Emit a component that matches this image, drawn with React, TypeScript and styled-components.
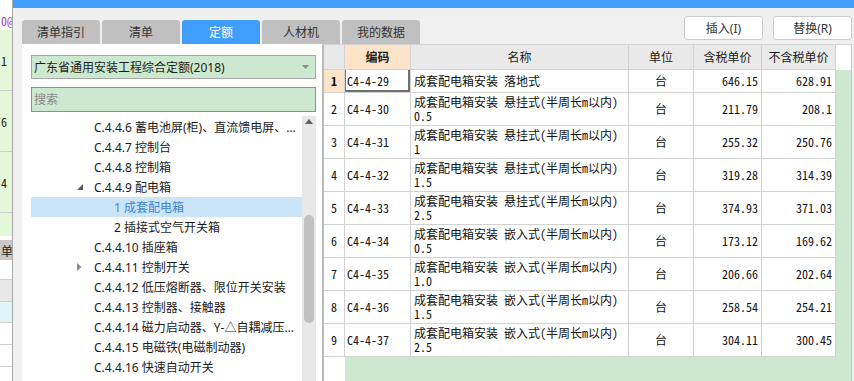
import React from "react";
import styled, { createGlobalStyle } from "styled-components";

const UI_FONT = `"Noto Sans", "Noto Sans CJK SC", sans-serif`;
const GRID_FONT = `"Noto Sans Mono CJK SC", "Liberation Mono", "Noto Sans CJK SC", monospace`;

const GlobalStyle = createGlobalStyle`
  html, body { margin: 0; padding: 0; overflow: hidden; background: #f0f0f0; }
  body { font-family: ${UI_FONT}; }
  * { box-sizing: border-box; }
`;

const Page = styled.div`
  display: flex;
  width: 854px;
  height: 381px;
  overflow: hidden;
`;

/* ---------- background application strip ---------- */
const BgStrip = styled.div`
  width: 13px;
  flex: none;
  display: flex;
  flex-direction: column;
  background: #fff;
  border-right: 1px solid #a9a9a9;
  overflow: hidden;
  font-family: ${GRID_FONT};
  font-size: 12px;
  color: #222;
`;

const BgCell = styled.div<{ $h: number; $bg?: string; $color?: string; $line?: boolean }>`
  height: ${(p) => p.$h}px;
  flex: none;
  background: ${(p) => p.$bg || "#fff"};
  color: ${(p) => p.$color || "#222"};
  border-bottom: ${(p) => (p.$line ? "1px solid #cfcfcf" : "none")};
  display: flex;
  align-items: center;
  white-space: nowrap;
  overflow: hidden;
  padding-left: 1px;
`;

/* ---------- dialog ---------- */
const Dialog = styled.div`
  flex: 1;
  min-width: 0;
  display: flex;
  flex-direction: column;
  background: #f0f0f0;
`;

const TitleBar = styled.div`
  height: 8px;
  flex: none;
  background: #409eff;
`;

const TopBar = styled.div`
  height: 36px;
  flex: none;
  display: flex;
  align-items: flex-end;
  padding: 0 2px 0 9px;
`;

const Tabs = styled.div`
  display: flex;
  gap: 2px;
`;

const Tab = styled.div<{ $active?: boolean }>`
  width: 78px;
  height: 24px;
  border-radius: 3px 3px 0 0;
  background: ${(p) => (p.$active ? "#409eff" : "#c0c0c0")};
  color: ${(p) => (p.$active ? "#fff" : "#333")};
  font-size: 12px;
  display: flex;
  align-items: center;
  justify-content: center;
`;

const Spacer = styled.div`
  flex: 1;
`;

const Buttons = styled.div`
  display: flex;
  gap: 10px;
  margin-bottom: 4px;
`;

const Button = styled.div`
  width: 79px;
  height: 24px;
  background: #fff;
  border: 1px solid #c9c9c9;
  border-radius: 3px;
  font-size: 12px;
  color: #333;
  display: flex;
  align-items: center;
  justify-content: center;
`;

const Content = styled.div`
  flex: 1;
  min-height: 0;
  display: flex;
  padding: 0 2px 0 9px;
`;

/* ---------- left panel ---------- */
const LeftPanel = styled.div`
  width: 300px;
  flex: none;
  background: #fff;
  display: flex;
  flex-direction: column;
  padding: 11px 6px 0 9px;
`;

const Select = styled.div`
  height: 24px;
  flex: none;
  background: #cce8cf;
  border: 1px solid #a6a6a6;
  display: flex;
  align-items: center;
  padding: 0 6px 0 2px;
  font-size: 12px;
  color: #1e1e1e;
`;

const SelectText = styled.span`
  flex: 1;
`;

const Search = styled.input`
  height: 25px;
  flex: none;
  margin-top: 8px;
  background: #cce8cf;
  border: 1px solid #4a9ff5;
  padding: 0 0 0 2px;
  font-family: ${UI_FONT};
  font-size: 12px;
  color: #222;
  outline: none;
  &::placeholder { color: #8a8a8a; }
`;

const TreeArea = styled.div`
  flex: 1;
  min-height: 0;
  margin-top: 4px;
  display: flex;
`;

const TreeList = styled.div`
  flex: 1;
  min-width: 0;
  padding-top: 1px;
  display: flex;
  flex-direction: column;
`;

const TreeRow = styled.div<{ $level: number; $selected?: boolean }>`
  height: 20px;
  flex: none;
  display: flex;
  align-items: center;
  padding-left: ${(p) => (p.$level === 1 ? 46 : 66)}px;
  padding-right: 2px;
  background: ${(p) => (p.$selected ? "#cce4f7" : "transparent")};
  color: ${(p) => (p.$selected ? "#3b86dc" : "#1a1a1a")};
  font-size: 12px;
`;

const Expander = styled.span`
  width: 17px;
  flex: none;
  display: flex;
  align-items: center;
`;

const TreeText = styled.span`
  flex: 1;
  min-width: 0;
  white-space: nowrap;
  overflow: hidden;
  text-overflow: ellipsis;
`;

const ScrollBar = styled.div`
  width: 14px;
  flex: none;
  background: #e8e8e8;
  display: flex;
  flex-direction: column;
  align-items: center;
  padding-top: 3px;
`;

const Thumb = styled.div`
  width: 10px;
  height: 108px;
  margin-top: 91px;
  border-radius: 5px;
  background: #c1c1c1;
`;

/* ---------- grid ---------- */
const COLS = "21px 66px 218px 65px 68px 74px 15px";

const Grid = styled.div`
  width: 530px;
  flex: none;
  display: flex;
  flex-direction: column;
  background: #fff;
  border-left: 2px solid #b9b9b9;
  border-right: 1px solid #c8c8c8;
  border-top: 1px solid #d4d4d4;
  font-family: ${GRID_FONT};
  font-size: 12px;
  color: #111;
`;

const Row = styled.div<{ $h: number }>`
  display: grid;
  grid-template-columns: ${COLS};
  height: ${(p) => p.$h}px;
  flex: none;
`;

const HeadCell = styled.div<{ $accent?: boolean; $blank?: boolean }>`
  background: ${(p) => (p.$blank ? "#fff" : p.$accent ? "#fde4c8" : "#e9e9e9")};
  border-right: ${(p) => (p.$blank ? "none" : "1px solid #d2d2d2")};
  border-bottom: ${(p) => (p.$blank ? "none" : "1px solid #d2d2d2")};
  font-family: ${UI_FONT};
  font-weight: ${(p) => (p.$accent ? 700 : 400)};
  color: #222;
  display: flex;
  align-items: center;
  justify-content: center;
`;

const Cell = styled.div<{ $align?: "left" | "center" | "right"; $accent?: boolean; $focus?: boolean; $bold?: boolean }>`
  background: ${(p) => (p.$accent ? "#fde4c8" : "#fff")};
  border-right: 1px solid #d2d2d2;
  border-bottom: 1px solid #d2d2d2;
  display: flex;
  align-items: center;
  justify-content: ${(p) => (p.$align === "right" ? "flex-end" : p.$align === "center" ? "center" : "flex-start")};
  padding: ${(p) => (p.$align === "right" ? "0 3px 0 0" : p.$align === "center" ? "0" : "0 0 0 2px")};
  font-weight: ${(p) => (p.$bold ? 700 : 400)};
  line-height: 14px;
  white-space: nowrap;
  overflow: hidden;
  box-shadow: ${(p) => (p.$focus ? "inset 1px 0 0 #3a8ee6, inset -2px -2px 0 #6f6f6f" : "none")};
`;

const NameLines = styled.div`
  display: flex;
  flex-direction: column;
  padding-left: 1px;
`;

const Filler = styled.div`
  background: #cce8cf;
`;

const BottomFill = styled.div`
  flex: 1;
  display: grid;
  grid-template-columns: 21px 1fr;
`;

const BlankCell = styled.div`
  background: #fff;
`;

type TreeItem = { label: string; level: 1 | 2; arrow?: "open" | "closed"; selected?: boolean };

const tree: TreeItem[] = [
  { label: "C.4.4.6 蓄电池屏(柜)、直流馈电屏、逆变电源柜安装", level: 1 },
  { label: "C.4.4.7 控制台", level: 1 },
  { label: "C.4.4.8 控制箱", level: 1 },
  { label: "C.4.4.9 配电箱", level: 1, arrow: "open" },
  { label: "1 成套配电箱", level: 2, selected: true },
  { label: "2 插接式空气开关箱", level: 2 },
  { label: "C.4.4.10 插座箱", level: 1 },
  { label: "C.4.4.11 控制开关", level: 1, arrow: "closed" },
  { label: "C.4.4.12 低压熔断器、限位开关安装", level: 1 },
  { label: "C.4.4.13 控制器、接触器", level: 1 },
  { label: "C.4.4.14 磁力启动器、Y-△自耦减压启动器安装", level: 1 },
  { label: "C.4.4.15 电磁铁(电磁制动器)", level: 1 },
  { label: "C.4.4.16 快速自动开关", level: 1 },
];

const HANG = "成套配电箱安装 悬挂式(半周长m以内)";
const EMB = "成套配电箱安装 嵌入式(半周长m以内)";

const rows = [
  { n: "1", code: "C4-4-29", name: ["成套配电箱安装 落地式"], tax: "646.15", notax: "628.91" },
  { n: "2", code: "C4-4-30", name: [HANG, "0.5"], tax: "211.79", notax: "208.1" },
  { n: "3", code: "C4-4-31", name: [HANG, "1"], tax: "255.32", notax: "250.76" },
  { n: "4", code: "C4-4-32", name: [HANG, "1.5"], tax: "319.28", notax: "314.39" },
  { n: "5", code: "C4-4-33", name: [HANG, "2.5"], tax: "374.93", notax: "371.03" },
  { n: "6", code: "C4-4-34", name: [EMB, "0.5"], tax: "173.12", notax: "169.62" },
  { n: "7", code: "C4-4-35", name: [EMB, "1.0"], tax: "206.66", notax: "202.64" },
  { n: "8", code: "C4-4-36", name: [EMB, "1.5"], tax: "258.54", notax: "254.21" },
  { n: "9", code: "C4-4-37", name: [EMB, "2.5"], tax: "304.11", notax: "300.45" },
];

const OpenArrow = () => (
  <svg width="6" height="6" viewBox="0 0 6 6">
    <polygon points="0,6 6,6 6,0" fill="#595959" />
  </svg>
);

const ClosedArrow = () => (
  <svg width="5" height="8" viewBox="0 0 5 8">
    <polygon points="0,0 4.5,4 0,8" fill="#8a8a8a" />
  </svg>
);

const DropArrow = () => (
  <svg width="7" height="4" viewBox="0 0 7 4">
    <polygon points="0,0 7,0 3.5,4" fill="#8c8c8c" />
  </svg>
);

const UpArrow = () => (
  <svg width="8" height="5" viewBox="0 0 8 5">
    <polygon points="0,5 8,5 4,0" fill="#606060" />
  </svg>
);

export default function App() {
  return (
    <>
      <GlobalStyle />
      <Page>
        <BgStrip>
          <BgCell $h={10} />
          <BgCell $h={20} $color="#a23cc8">0@1</BgCell>
          <BgCell $h={61} $bg="#e4f8d9" $line>1</BgCell>
          <BgCell $h={61} $bg="#e4f8d9" $line>6</BgCell>
          <BgCell $h={61} $bg="#e4f8d9" $line>4</BgCell>
          <BgCell $h={23} $bg="#e4f8d9" />
          <BgCell $h={4} />
          <BgCell $h={20} $bg="#c8c8c8">单位</BgCell>
          <BgCell $h={20} $line />
          <BgCell $h={22} $bg="#e8e8e8" $line />
          <BgCell $h={21} $bg="#dff6f6" $line />
          <BgCell $h={22} $line />
          <BgCell $h={22} $line />
          <BgCell $h={20} />
        </BgStrip>

        <Dialog>
          <TitleBar />
          <TopBar>
            <Tabs>
              <Tab>清单指引</Tab>
              <Tab>清单</Tab>
              <Tab $active>定额</Tab>
              <Tab>人材机</Tab>
              <Tab>我的数据</Tab>
            </Tabs>
            <Spacer />
            <Buttons>
              <Button>插入(I)</Button>
              <Button>替换(R)</Button>
            </Buttons>
          </TopBar>

          <Content>
            <LeftPanel>
              <Select>
                <SelectText>广东省通用安装工程综合定额(2018)</SelectText>
                <DropArrow />
              </Select>
              <Search placeholder="搜索" readOnly />
              <TreeArea>
                <TreeList>
                  {tree.map((t) => (
                    <TreeRow key={t.label} $level={t.level} $selected={t.selected}>
                      <Expander>
                        {t.arrow === "open" && <OpenArrow />}
                        {t.arrow === "closed" && <ClosedArrow />}
                      </Expander>
                      <TreeText>{t.label}</TreeText>
                    </TreeRow>
                  ))}
                </TreeList>
                <ScrollBar>
                  <UpArrow />
                  <Thumb />
                </ScrollBar>
              </TreeArea>
            </LeftPanel>

            <Grid>
              <Row $h={25}>
                <HeadCell />
                <HeadCell $accent>编码</HeadCell>
                <HeadCell>名称</HeadCell>
                <HeadCell>单位</HeadCell>
                <HeadCell>含税单价</HeadCell>
                <HeadCell>不含税单价</HeadCell>
                <HeadCell $blank />
              </Row>
              {rows.map((r, i) => (
                <Row key={r.code} $h={i === 0 ? 23 : 33}>
                  <Cell $align="center" $accent={i === 0} $bold={i === 0}>
                    {r.n}
                  </Cell>
                  <Cell $focus={i === 0}>{r.code}</Cell>
                  <Cell>
                    <NameLines>
                      {r.name.map((l) => (
                        <span key={l}>{l}</span>
                      ))}
                    </NameLines>
                  </Cell>
                  <Cell $align="center">台</Cell>
                  <Cell $align="right">{r.tax}</Cell>
                  <Cell $align="right">{r.notax}</Cell>
                  <Filler />
                </Row>
              ))}
              <BottomFill>
                <BlankCell />
                <Filler />
              </BottomFill>
            </Grid>
          </Content>
        </Dialog>
      </Page>
    </>
  );
}
